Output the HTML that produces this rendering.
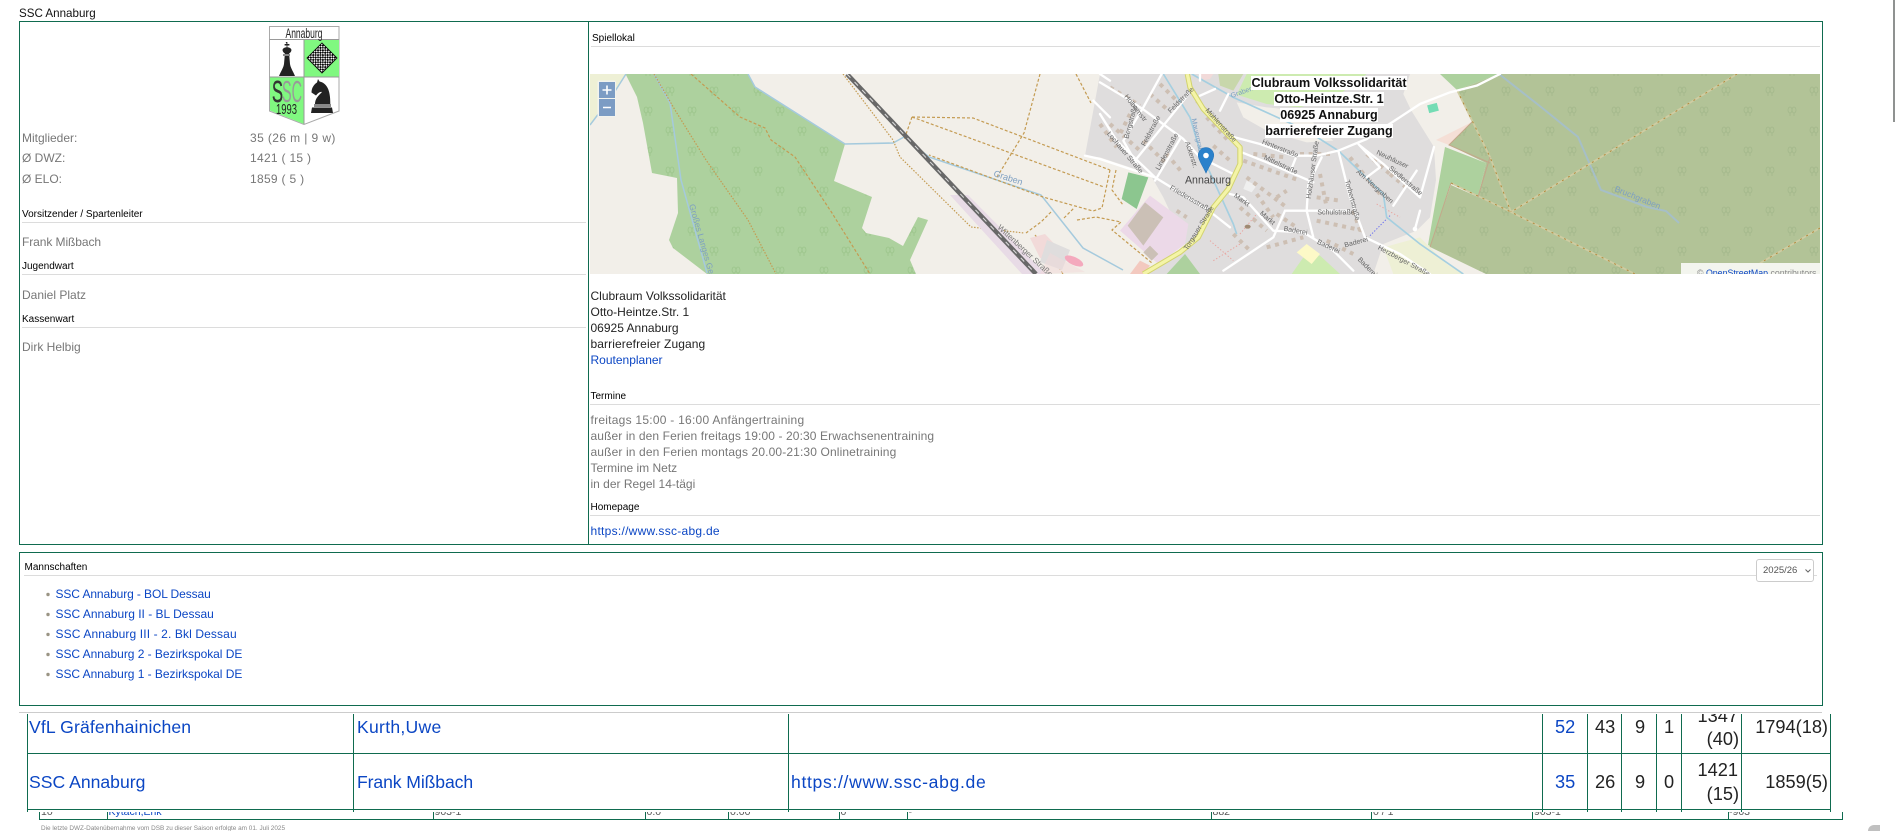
<!DOCTYPE html>
<html lang="de"><head><meta charset="utf-8"><title>SSC Annaburg</title>
<style>
html,body{margin:0;padding:0;width:1895px;height:831px;overflow:hidden;background:#fff}
body{position:relative;font-family:"Liberation Sans",Arial,sans-serif;font-size:12px;color:#222}
.t{position:absolute;white-space:nowrap;line-height:16px}
.g{color:#777}
.k{color:#000;font-size:10px}
a{color:#0b46c4;text-decoration:none}
.b{position:absolute;background:#0f6b4f}
.l{position:absolute;height:1px;background:#dcdcdc}
.big{font-size:17.6px;line-height:24px}
.num{font-size:18.2px;line-height:24px;color:#222}
.clip{position:absolute;overflow:hidden}
.sm{font-size:10.5px;color:#555}
</style></head><body>
<div class="t" style="left:19px;top:6px;color:#111;font-size:11.6px">SSC Annaburg</div>

<!-- top box -->
<div class="b" style="left:19px;top:21px;width:1803px;height:1px"></div>
<div class="b" style="left:19px;top:544px;width:1803px;height:1px"></div>
<div class="b" style="left:19px;top:21px;width:1px;height:524px"></div>
<div class="b" style="left:1822px;top:21px;width:1px;height:524px"></div>
<div class="b" style="left:588px;top:21px;width:1px;height:524px"></div>

<!-- logo -->
<svg style="position:absolute;left:265px;top:24px" width="80" height="104" viewBox="265 24 80 104">
<defs><pattern id="ch" width="3.4" height="3.4" patternUnits="userSpaceOnUse" patternTransform="rotate(45 322 58)"><rect width="3.4" height="3.4" fill="#fff"/><rect width="1.9" height="1.9" fill="#000"/><rect x="1.7" y="1.7" width="1.7" height="1.7" fill="#000"/></pattern></defs>
<path d="M269.5 26.5H339V111L304 124.5 269.5 111Z" fill="#fff" stroke="#a9a9a9"/>
<rect x="304" y="40" width="35" height="37" fill="#80f880"/>
<path d="M270 77.5H304V124L270 110.5Z" fill="#80f880"/>
<path d="M269.5 39.5H339M269.5 77H339M304 40V124" stroke="#999" fill="none"/>
<text x="304" y="38" font-size="14" text-anchor="middle" textLength="37" lengthAdjust="spacingAndGlyphs" fill="#222">Annaburg</text>
<path d="M322 43L337 58 322 73 307 58Z" fill="url(#ch)" stroke="#000" stroke-width=".8"/>
<path d="M285.6 42h1.800v2h2v1.500h-2v1.800c2.800.3 4.300 1.700 4 3.200-.3 1.500-1.400 2.400-2.300 3l.9 10.500c.5 3.500 2.600 6.500 5 12h-16c2.400-5.500 4.500-8.500 5-12l.9-10.500c-.9-.6-2-1.500-2.300-3-.3-1.500 1.200-2.900 4-3.200v-1.800h-2V44h2z" fill="#222"/>
<rect x="283" y="54" width="7" height="2" fill="#888"/>
<path d="M318 79l1.500 2.500c7 1.500 11 8 10.800 22.500H315c0-5 3-8 7-12-2-.5-4 1-6 3.500l-4.500-3c0-5 3-8.500 5.500-10z" fill="#222"/>
<rect x="314" y="104" width="17" height="3" fill="#888"/>
<path d="M312 107.500h20l1 5.500h-22z" fill="#222"/>
<text x="282" y="102" font-size="31" textLength="20" lengthAdjust="spacingAndGlyphs" fill="#999">SC</text>
<text x="272" y="102" font-size="31" textLength="11" lengthAdjust="spacingAndGlyphs" fill="#333" stroke="#333" stroke-width=".4">S</text>
<text x="276" y="114" font-size="15" textLength="21" lengthAdjust="spacingAndGlyphs" fill="#222">1993</text>
</svg>

<div class="t g" style="left:22px;top:130px">Mitglieder:</div><div class="t g" style="left:250px;top:130px;letter-spacing:.4px">35 (26 m | 9 w)</div>
<div class="t g" style="left:22px;top:150px">Ø DWZ:</div><div class="t g" style="left:250px;top:150px;letter-spacing:.3px">1421 ( 15 )</div>
<div class="t g" style="left:22px;top:171px">Ø ELO:</div><div class="t g" style="left:250px;top:171px;letter-spacing:.3px">1859 ( 5 )</div>

<div class="t k" style="left:22px;top:207px">Vorsitzender / Spartenleiter</div>
<div class="l" style="left:22px;top:222px;width:564px"></div>
<div class="t g" style="left:22px;top:234px;letter-spacing:-.08px">Frank Mißbach</div>
<div class="t k" style="left:22px;top:259px">Jugendwart</div>
<div class="l" style="left:22px;top:274px;width:564px"></div>
<div class="t g" style="left:22px;top:287px">Daniel Platz</div>
<div class="t k" style="left:22px;top:312px">Kassenwart</div>
<div class="l" style="left:22px;top:327px;width:564px"></div>
<div class="t g" style="left:22px;top:339px">Dirk Helbig</div>

<!-- right col -->
<div class="t k" style="left:592px;top:31px">Spiellokal</div>
<div class="l" style="left:591px;top:46px;width:1229px"></div>

<!-- map -->
<svg style="position:absolute;left:590px;top:74px" width="1230" height="200" viewBox="590 74 1230 200">
<defs>
<g id="tr"><ellipse cx="-2" cy="0" rx="2" ry="3"/><ellipse cx="2" cy="0" rx="2" ry="3"/><path d="M-2 3v3M2 3v3"/></g>
<pattern id="f1" width="44" height="40" patternUnits="userSpaceOnUse"><rect width="44" height="40" fill="#add19e"/><g fill="none" stroke="#9cc58b" stroke-width=".8"><use href="#tr" x="10" y="10"/><use href="#tr" x="32" y="30"/></g></pattern>
<pattern id="f2" width="44" height="40" patternUnits="userSpaceOnUse"><rect width="44" height="40" fill="#b2c397"/><g fill="none" stroke="#a3b88b" stroke-width=".8"><use href="#tr" x="10" y="10"/><use href="#tr" x="32" y="30"/></g></pattern>
</defs>
<rect x="590" y="74" width="1230" height="200" fill="#f2efe9"/>
<path d="M590 74H626L612 96 590 125Z" fill="#eef0d5"/>
<path d="M625.500 74L637 97 643 123 652 173 677 178 678 213 669 240 673 248 707 274H916L910 260 928 220 918 217 903 246 889 238 866 233 862 228 872 197 834 181 845 144 755 87 748 74Z" fill="url(#f1)"/>
<path d="M1440 74H1499L1457 90Z" fill="#add19e"/>
<path d="M1445 147L1486 163 1478 197 1451 183 1432 247 1428 245Z" fill="#add19e"/>
<path d="M1457 90L1499 74H1820V274H1486L1430 247 1451 185 1478 197 1486 163 1449 145 1472 122Z" fill="url(#f2)"/>
<path d="M1436 140L1472 122 1449 145Z" fill="#f5dfd6"/>
<rect x="1428" y="104" width="10" height="8" fill="#74dcb4" transform="rotate(-15 1433 108)"/>

<!-- water -->
<g fill="none" stroke="#a5cadd" stroke-width="1.500">
<path d="M654 74L670 103 681 180 707 273"/>
<path d="M748 74L755 87 845 144 893 143 904 137 929 157 1041 195 1083 248 1123 270"/>
<path d="M590 125L612 96 626 74"/>
</g>
<path d="M1499 74L1541 107 1578 137 1601 190 1647 207 1666 211 1679 223" fill="none" stroke="#a6bfc7" stroke-width="2"/>

<!-- tracks -->
<g fill="none" stroke="#c49b52" stroke-width="1.200" stroke-dasharray="3 2">
<path d="M691 74L740 117 765 128 771 140 795 157 832 213 870 274"/>
<path d="M654 74L675 110 706 160 748 220 776 274" stroke-dasharray="1.500 1.500"/>
<path d="M843 74L893 140 900 157 971 227 1024 233" stroke-dasharray="1.500 1.500"/>
<path d="M912 117L904 140M912 117L973 118 1110 170M912 117L1104 187"/>
<path d="M1040 74L1024 133 997 177"/>
<path d="M1076 74L1091 103"/>
<path d="M1110 170L1102 208 1093 211 1043 197 929 155"/>
<path d="M1077 220L1096 217 1121 222 1112 230 1152 263"/>
<path d="M1051 212L1041 222 1026 233M1064 218L1074 208"/>
<path d="M1116 170L1112 190 1123 205"/>
<path d="M1035 235L1050 253 1063 274"/>
</g>

<!-- rail -->
<path d="M950 195L968 195 1046 274H1022Z" fill="#e8dbe6"/>
<path d="M847 74L1036 274" stroke="#686868" stroke-width="4.500" fill="none"/>
<path d="M847 74L1036 274" stroke="#ddd" stroke-width="1" stroke-dasharray="5 6" fill="none"/>

<!-- small features around station -->
<path d="M1030 238L1045 234 1060 250 1052 262 1040 258Z" fill="#f2dad9"/>
<path d="M1047 240L1070 250 1062 270 1040 262Z" fill="#dfdddd"/>
<ellipse cx="1074" cy="261" rx="10" ry="4" fill="#f4a9bd" transform="rotate(25 1074 261)"/>
<path d="M1040 274L1050 253 1085 272Z" fill="#f2dad9" opacity=".5"/>

<!-- right forest tracks -->
<g fill="none">
<path d="M1737 74L1511 212M1457 90L1490 157 1511 212M1451 183L1511 212 1635 274M1820 228L1762 262 1745 274" stroke="#cfcca2" stroke-width="1.800"/>
<path d="M1737 74L1511 212M1457 90L1490 157 1511 212M1451 183L1511 212 1635 274M1820 228L1762 262 1745 274" stroke="#b08a3c" stroke-width="1" stroke-dasharray="2 5"/>
<path d="M1451 183L1430 247M1472 122L1449 145 1490 163M1490 157L1478 197" stroke="#c3a78a" stroke-width="1"/>
</g>

<!-- village in zoom coordinates -->
<g transform="translate(1100 74) scale(.33333)">
<path d="M0 0H930L910 60 933 108 1002 219 1008 318 990 430 950 470 850 510 820 600H130L260 520 190 370 150 300 0 250-45 245Z" fill="#dfdddd"/>
<path d="M300 0H340L330 15 310 18Z" fill="#f2dad9"/>
<path d="M355 0H430L400 50 360 35Z" fill="#c8d7ab"/>
<path d="M410 62L440 0H800L760 30 720 60 600 100 500 90Z" fill="#cdebb0"/>
<path d="M410 85L500 100 600 110 700 200 620 205 500 170 430 130Z" fill="#f2efe9"/>
<path d="M60 470L150 365 265 450 255 510 175 570Z" fill="#ecd9e8"/>
<path d="M135 385L190 430 130 515 83 455Z" fill="#cbc0b6"/>
<path d="M150 515L175 540 155 560 130 535Z" fill="#cbc0b6"/>
<path d="M85 295L145 310 110 405 65 375Z" fill="#8cc68f"/>
<path d="M200 600L255 540 300 600Z" fill="#add19e"/>
<path d="M575 600L610 550 660 545 720 600Z" fill="#cdebb0"/>
<path d="M590 535L620 510 660 540 635 570Z" fill="#fdf9c7"/>
<path d="M850 520L960 490 1040 570 1090 600H880Z" fill="#eef0d5"/>
<path d="M440 320L470 335 455 355 430 345Z" fill="#efefef"/>
<path d="M90 600L120 560 150 575 130 600Z" fill="#f3c9bf"/>

<g fill="none" stroke="#cdbfb3" stroke-width="12" stroke-dasharray="12 14">
<path d="M30 40L120 95M180 30L230 80M0 150L50 220M90 120L55 190M290 80L380 175M320 130L385 200M430 260L600 320M440 310L560 400M470 360L520 430M530 370L560 350M660 300L680 400M750 250L840 360M800 240L870 300M870 300L930 350M650 440L790 470M500 520L610 490M200 240L250 300M230 410L260 430M600 240L690 240M150 60L200 105M340 215L390 260M460 240L560 250M420 400L500 470M530 420L590 460M650 370L720 380M680 500L760 540M400 480L450 530M30 150L120 230M130 200L200 270M760 410L780 470"/>
</g>
<path d="M330 500L400 560M340 560L420 510M420 480L470 420M830 390L900 430" fill="none" stroke="#e8a5a0" stroke-width="3" stroke-dasharray="4 6"/>
<ellipse cx="443" cy="458" rx="9" ry="6" fill="#a08a73"/>
<path d="M810 485L870 425" stroke="#6a6ff0" stroke-width="3" stroke-dasharray="4 5" fill="none"/>

<g fill="none" stroke="#a5cfe0" stroke-width="5">
<path d="M190 0L270 130 300 230 400 450 410 480"/>
<path d="M275 0L400 70 620 170 715 230 850 360 860 430 960 510 1090 600"/>
</g>

<g fill="none" stroke="#fff" stroke-width="7" stroke-linejoin="round" stroke-linecap="round">
<path d="M0 25L75 70 135 110 250 195 300 250 400 300"/>
<path d="M0 120L50 200 165 310 320 405 390 460"/>
<path d="M-45 245L0 255 165 310"/>
<path d="M185 0L130 100 70 200 110 270"/>
<path d="M270 55L210 130 105 260"/>
<path d="M240 195L165 320"/>
<path d="M385 185L480 210 580 245 650 245 715 230 800 195 960 90 1050 55 1130 35 1200 0"/>
<path d="M425 235L500 265 640 325"/>
<path d="M590 245L570 295"/>
<path d="M665 250L625 330 620 410 640 490"/>
<path d="M715 230L750 370 795 490"/>
<path d="M555 410L745 410"/>
<path d="M390 360L430 370 520 470 610 475 700 530 760 590"/>
<path d="M795 490L900 540 990 600"/>
<path d="M555 410L520 490 370 590"/>
<path d="M780 215L850 270 960 370 1002 219"/>
<path d="M775 210L840 280 800 310"/>
<path d="M950 290L880 395"/>
<path d="M960 410L945 465"/>
<path d="M300 65L345 45M385 60L360 110M300 0L300 20M0 -0L30 20"/>
<path d="M-20 80L30 130"/>
</g>
<circle cx="945" cy="465" r="7" fill="#fff"/>
<path d="M262 0L270 40 310 105 420 220 420 270 385 345 340 400 295 490 240 535 130 600" fill="none" stroke="#d2d36d" stroke-width="16" stroke-linejoin="round"/>
<path d="M262 0L270 40 310 105 420 220 420 270 385 345 340 400 295 490 240 535 130 600" fill="none" stroke="#f4f4a8" stroke-width="10" stroke-linejoin="round"/>
<g font-family="'Liberation Sans',sans-serif" font-size="21" fill="#666">
<text transform="translate(315 110) rotate(48)">Mühlenstraße</text>
<text transform="translate(262 530) rotate(-58)">Torgauer Straße</text>
<text transform="translate(485 208) rotate(22)">Hinterstraße</text>
<text transform="translate(490 255) rotate(25)">Mittelstraße</text>
<text transform="translate(400 368) rotate(35)">Markt</text>
<text transform="translate(478 420) rotate(40)">Markt</text>
<text x="652" y="422">Schulstraße</text>
<text transform="translate(550 470) rotate(10)">Baderei</text>
<text transform="translate(650 508) rotate(25)">Baderei</text>
<text transform="translate(735 520) rotate(-15)">Baderei</text>
<text transform="translate(772 558) rotate(45)">Baderei</text>
<text transform="translate(832 525) rotate(28)">Herzberger Straße</text>
<text transform="translate(828 240) rotate(25)">Neuhäuser</text>
<text transform="translate(865 285) rotate(40)">Siedlerstraße</text>
<text transform="translate(768 295) rotate(42)">Am Neugraben</text>
<text transform="translate(632 375) rotate(-82)">Holzhäuser Straße</text>
<text transform="translate(735 320) rotate(75)">Torbertstraße</text>
<text transform="translate(208 345) rotate(30)">Friedensstraße</text>
<text transform="translate(178 290) rotate(-62)">Lindenstraße</text>
<text transform="translate(135 218) rotate(-62)">Feldstraße</text>
<text transform="translate(212 118) rotate(-45)">Feldstraße</text>
<text transform="translate(85 195) rotate(-75)">Bergstraße</text>
<text transform="translate(72 68) rotate(52)">Holbornstr</text>
<text transform="translate(20 180) rotate(50)">Lochauer Straße</text>
<text transform="translate(255 205) rotate(72)">Ackerstr.</text>
<text fill="#7d9fc2" transform="translate(275 135) rotate(78)">Mauergraben</text>
<text fill="#7d9fc2" transform="translate(395 72) rotate(-20)">Graben</text>
</g>
<text x="255" y="328" font-size="32" fill="#444" font-family="'Liberation Sans',sans-serif" textLength="138" lengthAdjust="spacingAndGlyphs">Annaburg</text>
</g>
<g font-family="'Liberation Sans',sans-serif" font-size="8" fill="#7d9fc2">
<text transform="translate(993 176) rotate(18)" font-size="9">Graben</text>
<text transform="translate(689 205) rotate(74)" font-size="8.500">Großes Langes Gestell</text>
<text transform="translate(1614 191) rotate(22)" font-size="8.500">Bruchgraben</text>
</g>
<text transform="translate(997 228) rotate(43)" font-family="'Liberation Sans',sans-serif" font-size="8" fill="#777">Wittenberger Straße</text>
<path d="M1206 147.500c-4.300 0-7.800 3.400-7.800 7.700 0 4.800 5.600 12.600 7.800 18.100 2.200-5.500 7.800-13.300 7.800-18.100 0-4.300-3.500-7.700-7.800-7.700z" fill="#2a81cb" stroke="#2672b4" stroke-width=".5"/>
<circle cx="1206" cy="155.500" r="2.800" fill="#fff"/>
<rect x="1681" y="263" width="139" height="11" fill="#f3f5ee"/>
<text x="1697" y="276" font-family="'Liberation Sans',sans-serif" font-size="8.800" fill="#888">© <tspan fill="#0b46c4">OpenStreetMap</tspan> contributors</text>
<rect x="597.500" y="80.500" width="18.500" height="36.500" rx="2" fill="#f2f3ee"/>
<rect x="599" y="82" width="16" height="16" fill="#7c9cc4"/>
<rect x="599" y="99" width="16" height="17" fill="#7c9cc4"/>
<path d="M607 85.500v9M602.500 90h9M603 107.500h8" stroke="#fff" stroke-width="1.600" fill="none"/>
</svg>

<div style="position:absolute;left:1179px;top:74.500px;width:300px;text-align:center;font-weight:bold;font-size:12.6px;line-height:16px;color:#111">
<span style="background:#fff">Clubraum Volkssolidarität</span><br><span style="background:#fff">Otto-Heintze.Str. 1</span><br><span style="background:#fff">06925 Annaburg</span><br><span style="background:#fff">barrierefreier Zugang</span></div>

<div class="t" style="left:590.500px;top:288px">Clubraum Volkssolidarität<br>Otto-Heintze.Str. 1<br>06925 Annaburg<br><span style="letter-spacing:.1px">barrierefreier Zugang</span><br><a href="#">Routenplaner</a></div>
<div class="t k" style="left:590.500px;top:389px">Termine</div>
<div class="l" style="left:590px;top:404px;width:1230px"></div>
<div class="t g" style="left:590.500px;top:412px"><span style="letter-spacing:.25px">freitags 15:00 - 16:00 Anfängertraining</span><br><span style="letter-spacing:.11px">außer in den Ferien freitags 19:00 - 20:30 Erwachsenentraining</span><br><span style="letter-spacing:.13px">außer in den Ferien montags 20.00-21:30 Onlinetraining</span><br>Termine im Netz<br>in der Regel 14-tägi</div>
<div class="t k" style="left:590.500px;top:500px">Homepage</div>
<div class="l" style="left:590px;top:515px;width:1230px"></div>
<div class="t" style="left:590.500px;top:523px;letter-spacing:.27px"><a href="#">https://www.ssc-abg.de</a></div>

<!-- Mannschaften -->
<div class="b" style="left:19px;top:552px;width:1803px;height:1px"></div>
<div class="b" style="left:19px;top:705px;width:1803px;height:1px"></div>
<div class="b" style="left:19px;top:552px;width:1px;height:154px"></div>
<div class="b" style="left:1822px;top:552px;width:1px;height:154px"></div>
<div class="t k" style="left:24.500px;top:560px">Mannschaften</div>
<div class="l" style="left:24px;top:575px;width:1793px"></div>
<div style="position:absolute;left:1756px;top:558.500px;width:56px;height:21px;border:1px solid #ccc;border-radius:3px;background:#fff;font-size:9.500px;line-height:21px;color:#555;text-indent:6px">2025/26<svg style="position:absolute;left:48px;top:9px" width="6" height="4" viewBox="0 0 6 4"><path d="M.5.5L3 3 5.500.5" fill="none" stroke="#666"/></svg></div>
<div class="t" style="left:55.500px;top:586px;letter-spacing:-.1px"><a href="#">SSC Annaburg - BOL Dessau</a></div>
<div class="t" style="left:55.500px;top:606px"><a href="#">SSC Annaburg II - BL Dessau</a></div>
<div class="t" style="left:55.500px;top:626px;letter-spacing:.12px"><a href="#">SSC Annaburg III - 2. Bkl Dessau</a></div>
<div class="t" style="left:55.500px;top:646px;letter-spacing:-.04px"><a href="#">SSC Annaburg 2 - Bezirkspokal DE</a></div>
<div class="t" style="left:55.500px;top:666px;letter-spacing:-.04px"><a href="#">SSC Annaburg 1 - Bezirkspokal DE</a></div>
<svg style="position:absolute;left:46px;top:590px" width="5" height="90" viewBox="0 0 5 90" fill="#9a9484"><circle cx="2" cy="4.500" r="1.700"/><circle cx="2" cy="24.500" r="1.700"/><circle cx="2" cy="44.500" r="1.700"/><circle cx="2" cy="64.500" r="1.700"/><circle cx="2" cy="84.500" r="1.700"/></svg>

<div style="position:absolute;left:19px;top:712px;width:1803px;height:1px;background:#ccc"></div>

<!-- lower clipped table -->
<div class="clip" style="left:0;top:812px;width:1895px;height:7px">
<div class="t sm" style="left:41px;top:-8px">10</div>
<div class="t sm" style="left:108.500px;top:-8px"><a href="#">Kytach,Erik</a></div>
<div class="t sm" style="left:434.500px;top:-8px">903-1</div>
<div class="t sm" style="left:646.500px;top:-8px">0.0</div>
<div class="t sm" style="left:730px;top:-8px">0.00</div>
<div class="t sm" style="left:840.500px;top:-8px">0</div>
<div class="t sm" style="left:908.500px;top:-8px">-</div>
<div class="t sm" style="left:1212.500px;top:-8px">882</div>
<div class="t sm" style="left:1373px;top:-8px">0 / 1</div>
<div class="t sm" style="left:1534px;top:-8px">903-1</div>
<div class="t sm" style="left:1729px;top:-8px">-903</div>
</div>
<div class="b" style="left:39px;top:819px;width:1803px;height:1px"></div>
<div class="b" style="left:39px;top:812px;width:1px;height:8px"></div>
<div class="b" style="left:107px;top:812px;width:1px;height:8px"></div>
<div class="b" style="left:433px;top:812px;width:1px;height:8px"></div>
<div class="b" style="left:645px;top:812px;width:1px;height:8px"></div>
<div class="b" style="left:728px;top:812px;width:1px;height:8px"></div>
<div class="b" style="left:839px;top:812px;width:1px;height:8px"></div>
<div class="b" style="left:907px;top:812px;width:1px;height:8px"></div>
<div class="b" style="left:1211px;top:812px;width:1px;height:8px"></div>
<div class="b" style="left:1371px;top:812px;width:1px;height:8px"></div>
<div class="b" style="left:1532px;top:812px;width:1px;height:8px"></div>
<div class="b" style="left:1728px;top:812px;width:1px;height:8px"></div>
<div class="b" style="left:1842px;top:812px;width:1px;height:8px"></div>
<div class="t" style="left:41px;top:821px;font-size:6.4px;line-height:16px;color:#888">Die letzte DWZ-Datenübernahme vom DSB zu dieser Saison erfolgte am 01. Juli 2025</div>

<!-- main table (clipped at top) -->
<div class="clip" style="left:0;top:714px;width:1895px;height:98px;background:#fff">
<div class="b" style="left:27px;top:39px;width:1804px;height:1px"></div>
<div class="b" style="left:27px;top:95px;width:1804px;height:1px"></div>
<div class="b" style="left:27px;top:0;width:1px;height:98px"></div>
<div class="b" style="left:353px;top:0;width:1px;height:98px"></div>
<div class="b" style="left:788px;top:0;width:1px;height:98px"></div>
<div class="b" style="left:1542px;top:0;width:1px;height:98px"></div>
<div class="b" style="left:1587px;top:0;width:1px;height:98px"></div>
<div class="b" style="left:1621px;top:0;width:1px;height:98px"></div>
<div class="b" style="left:1656px;top:0;width:1px;height:98px"></div>
<div class="b" style="left:1681px;top:0;width:1px;height:98px"></div>
<div class="b" style="left:1741px;top:0;width:1px;height:98px"></div>
<div class="b" style="left:1830px;top:0;width:1px;height:98px"></div>
<div class="t big" style="left:29px;top:1px;letter-spacing:.13px"><a href="#">VfL Gräfenhainichen</a></div>
<div class="t big" style="left:357px;top:1px;letter-spacing:.27px"><a href="#">Kurth,Uwe</a></div>
<div class="t big" style="left:29px;top:56px"><a href="#">SSC Annaburg</a></div>
<div class="t big" style="left:357px;top:56px;letter-spacing:-.1px"><a href="#">Frank Mißbach</a></div>
<div class="t big" style="left:791px;top:56px;letter-spacing:.66px"><a href="#">https://www.ssc-abg.de</a></div>
<div class="t num" style="left:1555px;top:1px"><a href="#">52</a></div>
<div class="t num" style="left:1595px;top:1px">43</div>
<div class="t num" style="left:1635px;top:1px">9</div>
<div class="t num" style="left:1664px;top:1px">1</div>
<div class="t num" style="right:157px;top:-10px">1347</div>
<div class="t num" style="right:156px;top:13px">(40)</div>
<div class="t num" style="right:67px;top:1px">1794(18)</div>
<div class="t num" style="left:1555px;top:56px"><a href="#">35</a></div>
<div class="t num" style="left:1595px;top:56px">26</div>
<div class="t num" style="left:1635px;top:56px">9</div>
<div class="t num" style="left:1664px;top:56px">0</div>
<div class="t num" style="right:157px;top:44px">1421</div>
<div class="t num" style="right:156px;top:68px">(15)</div>
<div class="t num" style="right:67px;top:56px">1859(5)</div>
</div>

<!-- scroll thumb & corner -->
<div style="position:absolute;left:1893px;top:0;width:2px;height:122px;background:#8f9291"></div>
<div style="position:absolute;left:1868px;top:825px;width:12px;height:6px;background:#c0c0c0;border-radius:10px 0 0 0"></div>
</body></html>
